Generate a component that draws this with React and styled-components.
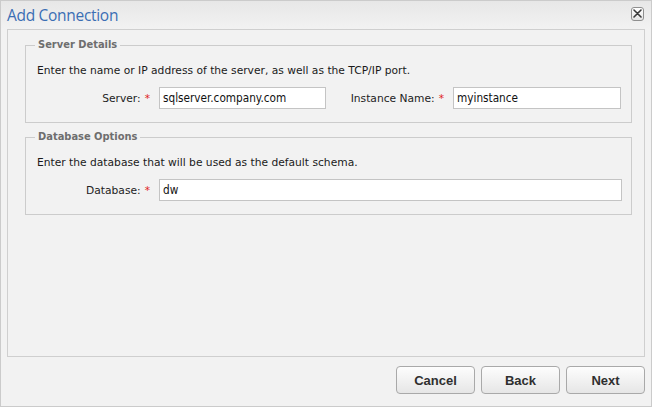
import React from "react";
import styled, { createGlobalStyle } from "styled-components";

const GlobalStyle = createGlobalStyle`
  html, body {
    margin: 0;
    padding: 0;
    background: #ffffff;
  }
  * {
    box-sizing: border-box;
  }
`;

const Window = styled.div`
  width: 652px;
  height: 407px;
  border: 1px solid #cbcbcb;
  background: #f2f2f2;
  display: flex;
  flex-direction: column;
  font-family: "DejaVu Sans", sans-serif;
  font-size: 10.7px;
  color: #1a1a1a;
`;

const TitleBar = styled.div`
  height: 28px;
  display: flex;
  align-items: center;
  justify-content: space-between;
  padding: 0 7px 0 6px;
  background: linear-gradient(#e7e7e7, #f2f2f2);
`;

const Title = styled.h1`
  margin: 0;
  font-family: "Open Sans", "Noto Sans", sans-serif;
  font-weight: 400;
  font-size: 15.5px;
  letter-spacing: -0.3px;
  color: #3b6eb4;
`;

const CloseButton = styled.button`
  width: 13px;
  height: 14px;
  padding: 0;
  border: 1px solid #8f8f8f;
  border-radius: 3px;
  background: linear-gradient(#ffffff, #e4e4e4);
  display: flex;
  align-items: center;
  justify-content: center;
  margin-top: -3px;
`;

const Panel = styled.div`
  margin: 0 6px 0 6px;
  height: 328px;
  border: 1px solid #cfcfcf;
  padding: 8px 12px 0 17px;
`;

const Group = styled.fieldset`
  margin: 0 0 7px 0;
  padding: 0 9px 13px 11px;
  border: 1px solid #cccccc;
`;

const Legend = styled.legend`
  margin-left: -2px;
  padding: 0 3px;
  font-family: "DejaVu Sans Condensed", "DejaVu Sans", sans-serif;
  font-weight: 700;
  font-size: 11px;
  line-height: 14px;
  color: #6e6e6e;
`;

const Hint = styled.p`
  margin: 12px 0 0 0;
  line-height: 14px;
`;

const Row = styled.div`
  display: flex;
  align-items: center;
  margin-top: 9px;
`;

const Label = styled.label`
  width: ${(p) => p.$width}px;
  flex: none;
  text-align: right;
  padding-right: 9px;
  white-space: nowrap;
  color: #222;
`;

const Required = styled.span`
  color: #e02020;
  margin-left: 4px;
`;

const Input = styled.input`
  height: 22px;
  width: ${(p) => (p.$width ? `${p.$width}px` : "auto")};
  flex: ${(p) => (p.$grow ? 1 : "none")};
  min-width: 0;
  border: 1px solid #c4c4c4;
  background: #ffffff;
  padding: 0 3px;
  font-family: "DejaVu Sans Condensed", "DejaVu Sans", sans-serif;
  font-size: 11.7px;
  color: #111;
  outline: none;
`;

const Footer = styled.div`
  display: flex;
  justify-content: flex-end;
  gap: 6px;
  padding: 9px 6px 0 0;
`;

const Button = styled.button`
  width: 79px;
  height: 28px;
  border: 1px solid #a9a9a9;
  border-radius: 4px;
  background: linear-gradient(#fdfdfd, #e6e6e6);
  font-family: "Liberation Sans", Arial, sans-serif;
  font-weight: 700;
  font-size: 13px;
  color: #2f2f2f;
  cursor: pointer;
`;

function CloseIcon() {
  return (
    <svg width="9" height="9" viewBox="0 0 9 9">
      <path
        d="M1 1 L8 8 M8 1 L1 8"
        stroke="#3a3a3a"
        strokeWidth="1.6"
        strokeLinecap="round"
      />
    </svg>
  );
}

export default function App() {
  return (
    <>
      <GlobalStyle />
      <Window>
        <TitleBar>
          <Title>Add Connection</Title>
          <CloseButton aria-label="Close">
            <CloseIcon />
          </CloseButton>
        </TitleBar>
        <Panel>
          <Group>
            <Legend>Server Details</Legend>
            <Hint>
              Enter the name or IP address of the server, as well as the TCP/IP
              port.
            </Hint>
            <Row>
              <Label $width={122}>
                Server:<Required>*</Required>
              </Label>
              <Input $width={167} defaultValue="sqlserver.company.com" />
              <Label $width={127}>
                Instance Name:<Required>*</Required>
              </Label>
              <Input $width={168} defaultValue="myinstance" />
            </Row>
          </Group>
          <Group>
            <Legend>Database Options</Legend>
            <Hint>Enter the database that will be used as the default schema.</Hint>
            <Row>
              <Label $width={122}>
                Database:<Required>*</Required>
              </Label>
              <Input $grow defaultValue="dw" />
            </Row>
          </Group>
        </Panel>
        <Footer>
          <Button>Cancel</Button>
          <Button>Back</Button>
          <Button>Next</Button>
        </Footer>
      </Window>
    </>
  );
}
